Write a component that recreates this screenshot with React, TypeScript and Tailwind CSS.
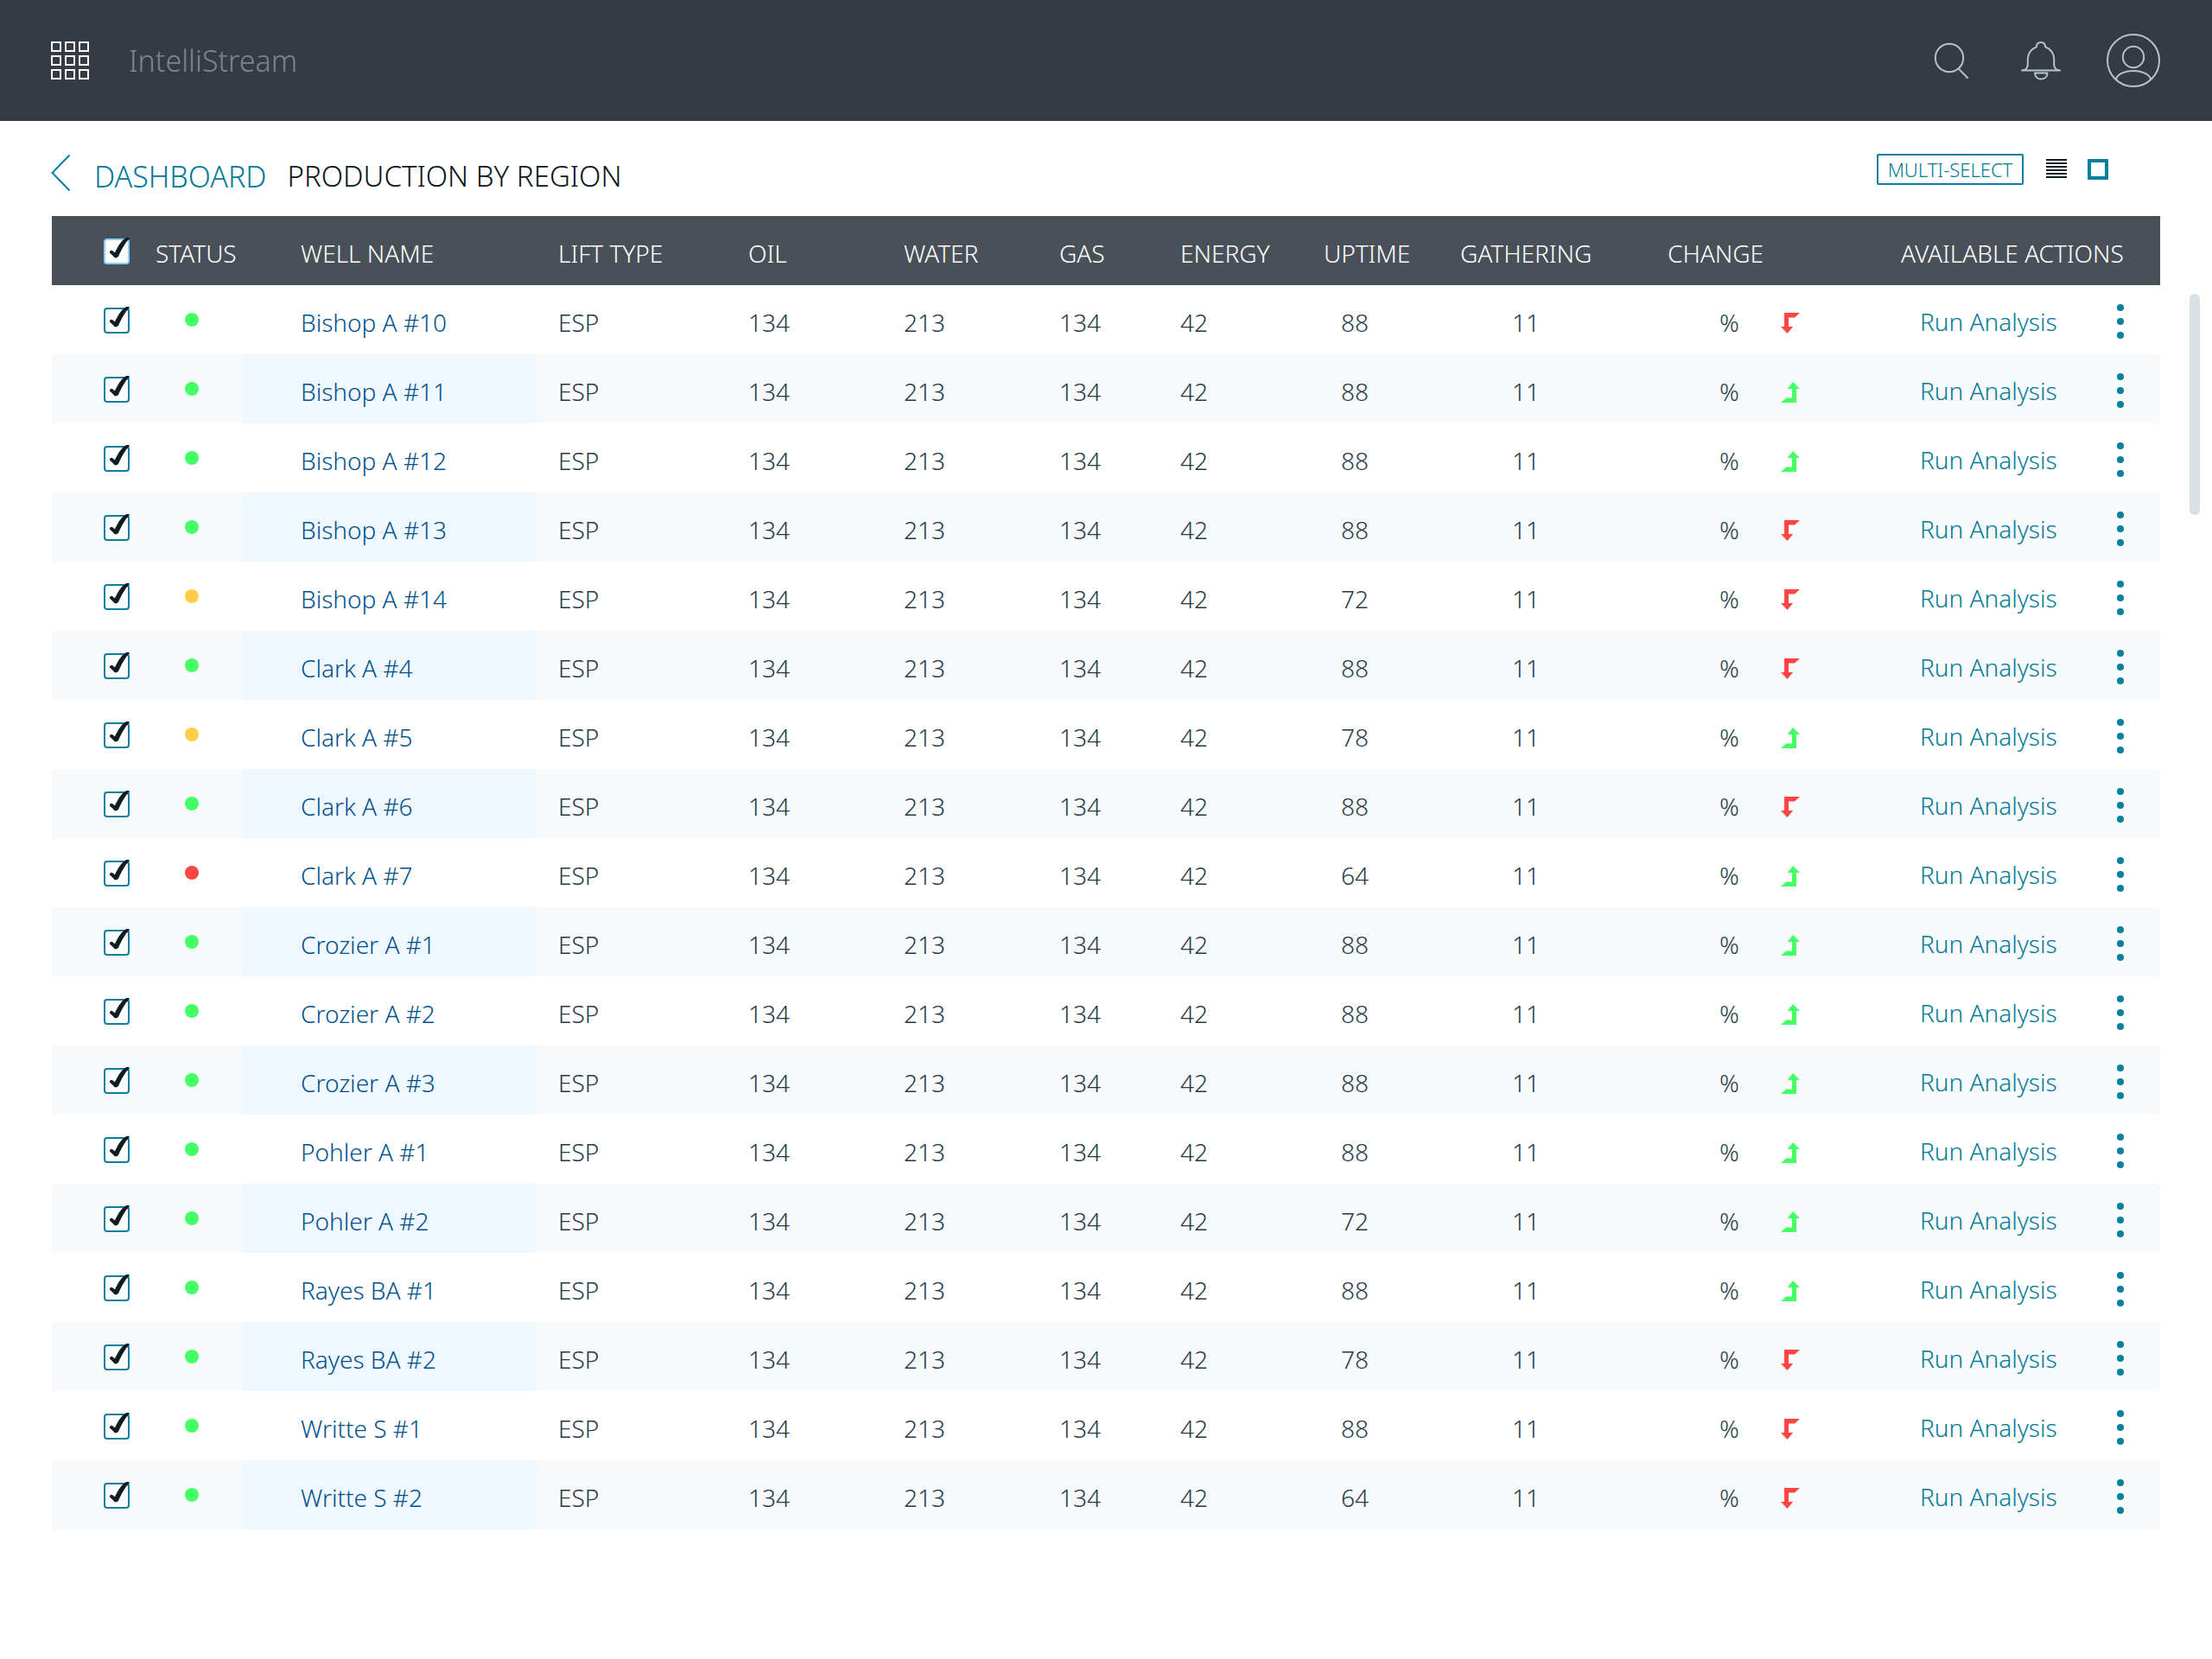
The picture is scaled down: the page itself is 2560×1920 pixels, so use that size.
import React, { useState } from "react";

type Level = "good" | "warn" | "bad";
type Well = { name: string; status: Level; uptime: number; up: boolean };

const WELLS: Well[] = [
  { name: "Bishop A #10", status: "good", uptime: 88, up: false },
  { name: "Bishop A #11", status: "good", uptime: 88, up: true },
  { name: "Bishop A #12", status: "good", uptime: 88, up: true },
  { name: "Bishop A #13", status: "good", uptime: 88, up: false },
  { name: "Bishop A #14", status: "warn", uptime: 72, up: false },
  { name: "Clark A #4", status: "good", uptime: 88, up: false },
  { name: "Clark A #5", status: "warn", uptime: 78, up: true },
  { name: "Clark A #6", status: "good", uptime: 88, up: false },
  { name: "Clark A #7", status: "bad", uptime: 64, up: true },
  { name: "Crozier A #1", status: "good", uptime: 88, up: true },
  { name: "Crozier A #2", status: "good", uptime: 88, up: true },
  { name: "Crozier A #3", status: "good", uptime: 88, up: true },
  { name: "Pohler A #1", status: "good", uptime: 88, up: true },
  { name: "Pohler A #2", status: "good", uptime: 72, up: true },
  { name: "Rayes BA #1", status: "good", uptime: 88, up: true },
  { name: "Rayes BA #2", status: "good", uptime: 78, up: false },
  { name: "Writte S #1", status: "good", uptime: 88, up: false },
  { name: "Writte S #2", status: "good", uptime: 64, up: false },
];

const DOT: Record<Level, string> = {
  good: "bg-[#46ff64]",
  warn: "bg-[#ffcd46]",
  bad: "bg-[#ff4444]",
};

function CheckBox({
  label,
  checked,
  onChange,
  border,
}: {
  label: string;
  checked: boolean;
  onChange: () => void;
  border: string;
}) {
  return (
    <label className="relative block size-[30px] cursor-pointer">
      <input
        type="checkbox"
        aria-label={label}
        checked={checked}
        onChange={onChange}
        className={`block size-[30px] appearance-none rounded-[4px] border-2 bg-white ${border}`}
      />
      {checked && (
        <svg viewBox="0 0 30 30" className="pointer-events-none absolute inset-0 size-[30px] overflow-visible" aria-hidden="true">
          <path
            d="M7 16.6C6.6 14.6 8.8 13 10.6 14.4L12.9 16.6C15.6 10.600 19.800 3.200 24.200 0.200C25.600 -1 28 -1.200 29.800 -0.800L29.400 0.800C25 4.600 20.600 13 17.400 20C16.600 21.800 15.400 22.300 13.800 22.300C12.400 22.300 11.800 21.400 11 20.200Z"
            fill="#0f1c24"
          />
        </svg>
      )}
    </label>
  );
}

function ChangeArrow({ up }: { up: boolean }) {
  return (
    <svg viewBox="0 0 22 24" className="block h-6 w-[22px]" role="img" aria-label={up ? "Up" : "Down"}>
      {up ? (
        <path d="M14 0L22 8H18V24H0L6 18.500H13V8H7.500Z" fill="#46ff64" />
      ) : (
        <path d="M7.500 24L0 16H4V0H22L16 5.500H9V16H14Z" fill="#ff4444" />
      )}
    </svg>
  );
}

function TopBar() {
  return (
    <header className="flex h-[140px] items-center justify-between bg-[#363a42] pr-[60px] pl-[59px]">
      <div className="flex items-center gap-[46px]">
        <button type="button" aria-label="Apps">
          <svg viewBox="0 0 44 44" className="block size-11" fill="none" stroke="#fff" strokeWidth="2" aria-hidden="true">
            {[1, 17, 33].map((y) => [1, 17, 33].map((x) => <rect key={`${x}-${y}`} x={x} y={y} width="10" height="10" />))}
          </svg>
        </button>
        <span className="text-[34px] leading-[46px] text-[#7a868c]">IntelliStream</span>
      </div>
      <div className="flex items-center">
        <button type="button" aria-label="Search" className="mr-[59px]">
          <svg viewBox="0 0 42 42" className="block size-[42px]" fill="none" stroke="#b6c3cc" strokeWidth="2" strokeLinecap="round" aria-hidden="true">
            <circle cx="18" cy="18" r="16.200" />
            <path d="M28.600 30.400L39 41" />
          </svg>
        </button>
        <button type="button" aria-label="Notifications" className="mr-[53px]">
          <svg viewBox="0 0 46 46" className="block size-[46px]" fill="none" stroke="#b6c3cc" strokeWidth="2" strokeLinecap="round" strokeLinejoin="round" aria-hidden="true">
            <path d="M1 34.500C5.500 34 7.500 32.500 7.800 28V21C8.200 14.500 11.500 9.800 17.800 7.400C18 4 20 2 23 2C26 2 28 4 28.200 7.400C34.500 9.800 37.800 14.500 38.200 21V28C38.500 32.500 40.500 34 45 34.500Z" />
            <path d="M16 37.500H30.500C30.300 42 27 44.600 23.200 44.600C19.500 44.600 16.200 42 16 37.500Z" />
          </svg>
        </button>
        <button type="button" aria-label="Profile">
          <svg viewBox="0 0 62 62" className="block size-[62px]" fill="none" stroke="#b6c3cc" strokeWidth="2" aria-hidden="true">
            <circle cx="31" cy="31" r="30" />
            <circle cx="31" cy="27" r="12.200" />
            <path d="M11.200 53.500V51.500C13.500 46.500 21.500 43 31 43C40.500 43 48.500 46.500 50.800 51.500V53.500" />
          </svg>
        </button>
      </div>
    </header>
  );
}

function TitleBar({ multi, onMulti }: { multi: boolean; onMulti: () => void }) {
  return (
    <div className="flex h-[110px] items-start justify-between pt-[38px] pr-[120px] pl-[59px]">
      <nav className="flex items-start" aria-label="Breadcrumb">
        <a href="#back" aria-label="Back" className="mr-7">
          <svg viewBox="0 0 22 44" className="block h-11 w-[22px]" fill="none" stroke="#09819c" strokeWidth="2" aria-hidden="true">
            <path d="M21.500 1.500L1.500 22L21.500 42.500" />
          </svg>
        </a>
        <a href="#dashboard" className="mr-6 pt-[3px] text-[34px] leading-[46px] text-[#007a96]">
          DASHBOARD
        </a>
        <h1 className="pt-[3px] text-[33px] leading-[46px] text-[#0a141a]">PRODUCTION BY REGION</h1>
      </nav>
      <div className="flex items-center">
        <button
          type="button"
          aria-pressed={multi}
          onClick={onMulti}
          className="mr-[26px] h-9 w-[170px] rounded-[2px] border-2 border-[#09819c] text-[22px] leading-8 whitespace-nowrap text-[#007a96]"
        >
          MULTI-SELECT
        </button>
        <button type="button" aria-label="List view" className="mr-6">
          <svg viewBox="0 0 24 24" className="block size-6" fill="#0f1c24" aria-hidden="true">
            {[0, 4, 8, 12, 16, 20].map((y) => (
              <rect key={y} y={y} width="24" height="2" />
            ))}
          </svg>
        </button>
        <button type="button" aria-label="Card view" className="size-6 border-4 border-[#09819c]" />
      </div>
    </div>
  );
}

export default function App() {
  const [picked, setPicked] = useState<string[]>(WELLS.map((w) => w.name));
  const [multi, setMulti] = useState(true);
  const all = picked.length === WELLS.length;
  const toggle = (name: string) =>
    setPicked((p) => (p.includes(name) ? p.filter((n) => n !== name) : [...p, name]));

  return (
    <div className="min-h-screen bg-white font-['Noto_Sans','Open_Sans',sans-serif] font-light">
      <TopBar />
      <TitleBar multi={multi} onMulti={() => setMulti(!multi)} />
      <main className="flex pr-[14px] pl-[60px]">
        <table className="w-full flex-1 table-fixed border-collapse text-left text-[28px] leading-[38px] text-[#263a46]">
          <colgroup>
            <col className="w-[120px]" />
            <col className="w-[100px]" />
            <col className="w-[340px]" />
            <col className="w-[220px]" />
            <col className="w-[180px]" />
            <col className="w-[180px]" />
            <col className="w-[140px]" />
            <col className="w-[166px]" />
            <col className="w-[158px]" />
            <col className="w-[240px]" />
            <col className="w-[270px]" />
            <col />
          </colgroup>
          <thead>
            <tr className="h-20 bg-[#4a5058] whitespace-nowrap text-white [&>th]:pt-1.5 [&>th]:pl-[26px] [&>th]:font-light">
              <td className="pt-0.5 pl-[60px]">
                <CheckBox
                  label="Select all wells"
                  checked={all}
                  onChange={() => setPicked(all ? [] : WELLS.map((w) => w.name))}
                  border="border-[#88d1ff]"
                />
              </td>
              <th scope="col" className="!pl-0">STATUS</th>
              <th scope="col" className="!pl-[68px]">WELL NAME</th>
              <th scope="col">LIFT TYPE</th>
              <th scope="col">OIL</th>
              <th scope="col">WATER</th>
              <th scope="col">GAS</th>
              <th scope="col">ENERGY</th>
              <th scope="col">UPTIME</th>
              <th scope="col">GATHERING</th>
              <th scope="col">CHANGE</th>
              <th scope="col">AVAILABLE ACTIONS</th>
            </tr>
          </thead>
          <tbody>
            {WELLS.map((w) => (
              <tr key={w.name} className="group h-20 whitespace-nowrap even:bg-[#f7f9fb]">
                <td className="pt-0.5 pl-[60px]">
                  <CheckBox
                    label={`Select ${w.name}`}
                    checked={picked.includes(w.name)}
                    onChange={() => toggle(w.name)}
                    border="border-[#09819c]"
                  />
                </td>
                <td className="pl-[34px]">
                  <span role="img" aria-label={`Status: ${w.status}`} className={`block size-4 rounded-full ${DOT[w.status]}`} />
                </td>
                <td className="pt-1.5 pl-[68px] group-even:bg-[#f0f8ff]">
                  <a href="#well" className="text-[#00508c]">{w.name}</a>
                </td>
                <td className="pt-1.5 pl-[26px]">ESP</td>
                <td className="pt-1.5 pl-[26px]">134</td>
                <td className="pt-1.5 pl-[26px]">213</td>
                <td className="pt-1.5 pl-[26px]">134</td>
                <td className="pt-1.5 pl-[26px]">42</td>
                <td className="pt-1.5 pl-[46px]">{w.uptime}</td>
                <td className="pt-1.5 pl-[86px]">11</td>
                <td className="pt-1.5 pl-[86px]">
                  <div className="flex items-center gap-12">
                    <span>%</span>
                    <span className="pt-0.5">
                      <ChangeArrow up={w.up} />
                    </span>
                  </div>
                </td>
                <td className="pt-1 pr-[42px] pl-12">
                  <div className="flex items-center justify-between">
                    <a href="#run" className="text-[#007a96]">Run Analysis</a>
                    <button type="button" aria-label={`More actions for ${w.name}`}>
                      <svg viewBox="0 0 8 40" className="block h-10 w-2" fill="#09819c" aria-hidden="true">
                        <circle cx="4" cy="4" r="4" />
                        <circle cx="4" cy="20" r="4" />
                        <circle cx="4" cy="36" r="4" />
                      </svg>
                    </button>
                  </div>
                </td>
              </tr>
            ))}
          </tbody>
        </table>
        <div className="mt-[90px] ml-[34px] h-[256px] w-3 shrink-0 rounded-full bg-[#d8e0e3]" aria-hidden="true" />
      </main>
    </div>
  );
}
